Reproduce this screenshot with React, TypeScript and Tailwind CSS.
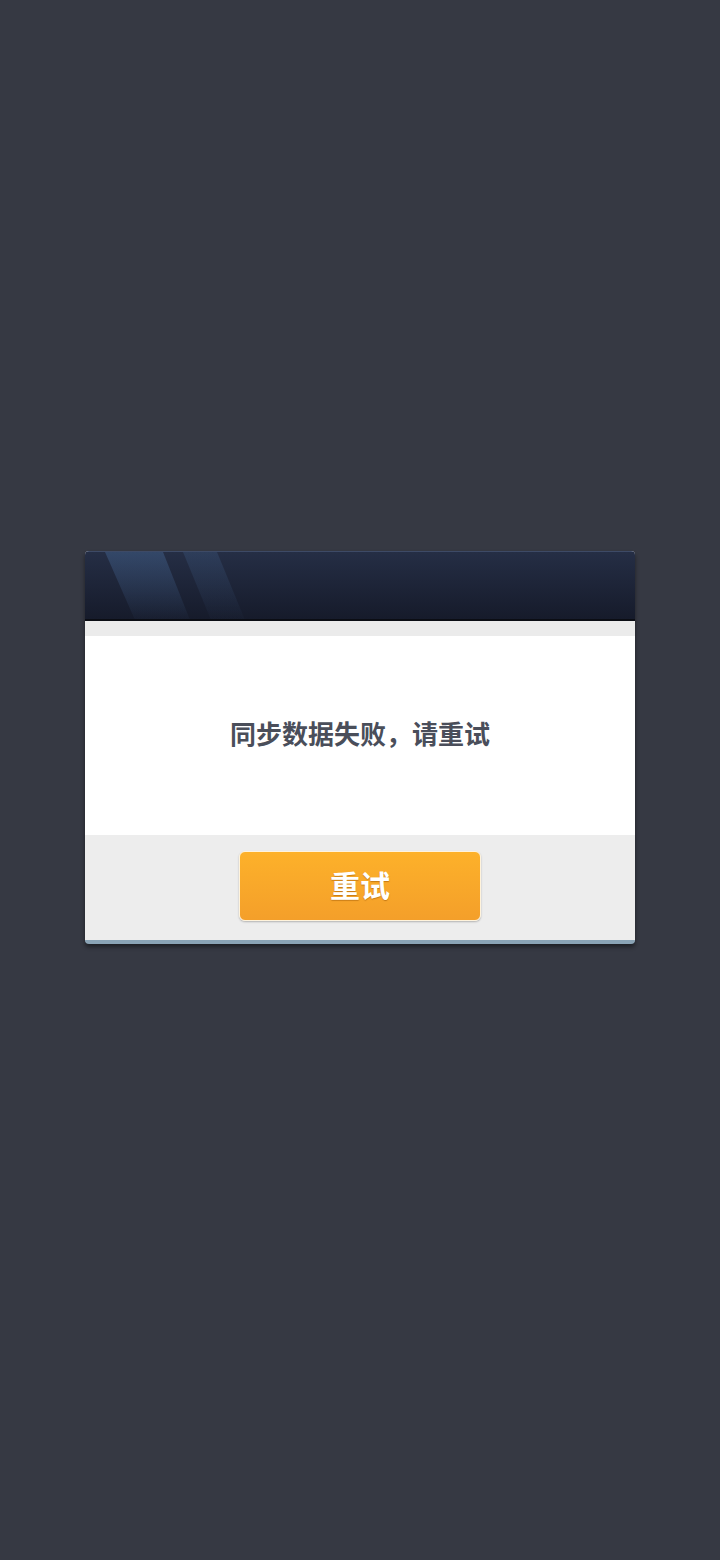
import React from 'react';

function App() {
  return (
    <div
      className="min-h-[1560px] w-full bg-[#363943] flex items-start justify-center pt-[551px]"
      style={{ fontFamily: '"Noto Sans CJK SC", "Noto Sans", sans-serif' }}
    >
      <div className="w-[550px] rounded-[4px] overflow-hidden shadow-[0_3px_4px_rgba(0,0,0,0.45)] bg-[#ededed] border-b-[4px] border-[#8aa3b5]">
        {/* Header */}
        <div className="relative h-[68px] bg-gradient-to-b from-[#252e45] to-[#161b2b] border-t border-[#3d4a66] overflow-hidden">
          <svg className="absolute inset-0" width="550" height="68" viewBox="0 0 550 68">
            <defs>
              <linearGradient id="fade" x1="0" y1="0" x2="0" y2="1">
                <stop offset="0" stopColor="#3f5c85" stopOpacity="0.55" />
                <stop offset="1" stopColor="#3f5c85" stopOpacity="0.05" />
              </linearGradient>
            </defs>
            <polygon points="20,0 78,0 105,68 50,68" fill="url(#fade)" />
            <polygon points="98,0 132,0 160,68 126,68" fill="url(#fade)" opacity="0.6" />
          </svg>
        </div>
        <div className="h-[2px] bg-[#0b0d14]" />
        <div className="h-[15px] bg-[#ebebeb]" />
        {/* Body */}
        <div className="h-[199px] bg-white flex items-center justify-center pb-[6px]">
          <p className="text-[26px] font-bold text-[#4a4e5a] leading-none">同步数据失败，请重试</p>
        </div>
        {/* Footer */}
        <div className="h-[105px] flex justify-center pt-[16px]">
          <button className="w-[242px] h-[70px] rounded-[6px] bg-gradient-to-b from-[#fdb12a] to-[#f49f2a] border border-[#fff3dc] shadow-[0_1px_2px_rgba(0,0,0,0.25)] flex items-center justify-center pb-[4px]">
            <span className="text-[30px] font-bold text-white leading-none [text-shadow:0_1px_1px_rgba(150,80,0,0.5)]">重试</span>
          </button>
        </div>
      </div>
    </div>
  );
}

export default App;
